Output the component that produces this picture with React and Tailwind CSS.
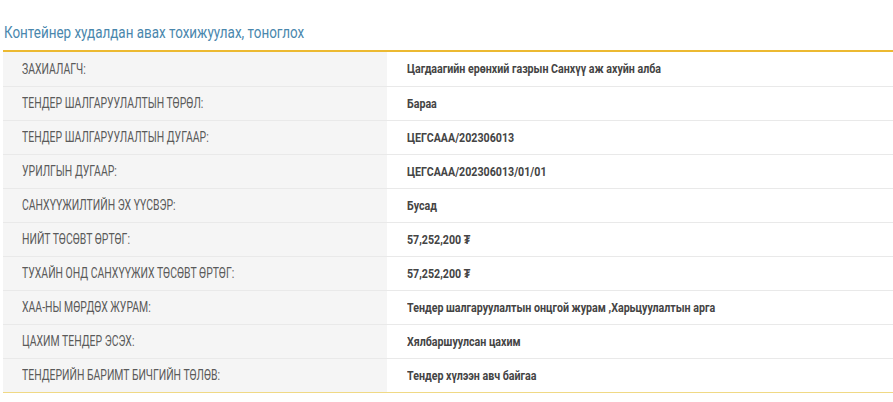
import React from "react";

const rows = [
  ["ЗАХИАЛАГЧ:", "Цагдаагийн ерөнхий газрын Санхүү аж ахуйн алба"],
  ["ТЕНДЕР ШАЛГАРУУЛАЛТЫН ТӨРӨЛ:", "Бараа"],
  ["ТЕНДЕР ШАЛГАРУУЛАЛТЫН ДУГААР:", "ЦЕГСААА/202306013"],
  ["УРИЛГЫН ДУГААР:", "ЦЕГСААА/202306013/01/01"],
  ["САНХҮҮЖИЛТИЙН ЭХ ҮҮСВЭР:", "Бусад"],
  ["НИЙТ ТӨСӨВТ ӨРТӨГ:", "57,252,200 ₮"],
  ["ТУХАЙН ОНД САНХҮҮЖИХ ТӨСӨВТ ӨРТӨГ:", "57,252,200 ₮"],
  ["ХАА-НЫ МӨРДӨХ ЖУРАМ:", "Тендер шалгаруулалтын онцгой журам ,Харьцуулалтын арга"],
  ["ЦАХИМ ТЕНДЕР ЭСЭХ:", "Хялбаршуулсан цахим"],
  ["ТЕНДЕРИЙН БАРИМТ БИЧГИЙН ТӨЛӨВ:", "Тендер хүлээн авч байгаа"],
];

export default function App() {
  return (
    <div
      className="w-[893px] h-[402px] bg-white overflow-hidden pt-[21px]"
      style={{ fontFamily: '"Roboto", "Liberation Sans", sans-serif' }}
    >
      <h2 className="pl-[4px] text-[17px] leading-[22px] text-[#4a87ad] font-normal h-[29px] whitespace-nowrap">
        <span className="inline-block origin-left scale-x-[0.79]">
          Контейнер худалдан авах тохижуулах, тоноглох
        </span>
      </h2>
      <div className="ml-[3px] border-t-2 border-t-[#ecb931] border-b border-b-[#f0d985]">
        {rows.map(([k, v], i) => (
          <div
            key={i}
            className={`flex h-[34px] ${i > 0 ? "border-t border-[#e9e9e9]" : ""}`}
          >
            <div className="w-[384px] bg-[#f5f5f5] pl-[19px] flex items-center text-[14px] text-[#5a5a5a] whitespace-nowrap">
              <span className="inline-block origin-left scale-x-[0.745]">{k}</span>
            </div>
            <div className="flex-1 pl-[20px] flex items-center text-[13px] font-bold text-[#444] whitespace-nowrap">
              <span className="inline-block origin-left scale-x-[0.82]">{v}</span>
            </div>
          </div>
        ))}
      </div>
    </div>
  );
}
